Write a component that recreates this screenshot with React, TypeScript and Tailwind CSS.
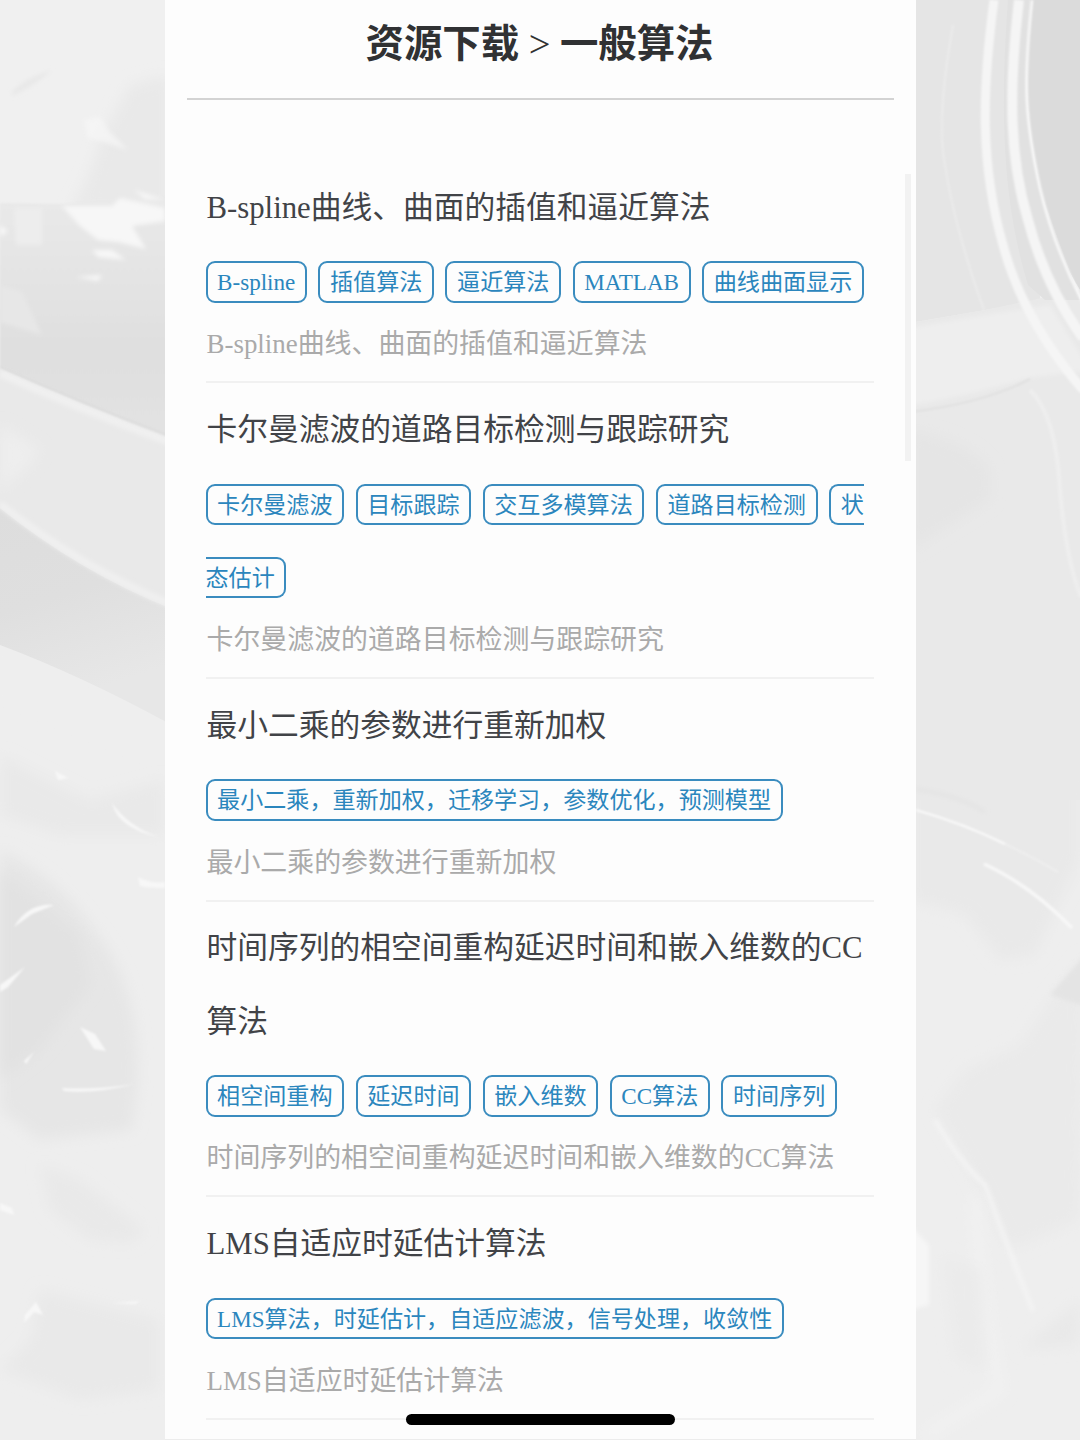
import React from "react";

type Item = { title: string; tags: string[]; description?: string };

const items: Item[] = [
  {
    title: "B-spline曲线、曲面的插值和逼近算法",
    tags: ["B-spline", "插值算法", "逼近算法", "MATLAB", "曲线曲面显示"],
  },
  {
    title: "卡尔曼滤波的道路目标检测与跟踪研究",
    tags: ["卡尔曼滤波", "目标跟踪", "交互多模算法", "道路目标检测", "状态估计"],
  },
  {
    title: "最小二乘的参数进行重新加权",
    tags: ["最小二乘，重新加权，迁移学习，参数优化，预测模型"],
  },
  {
    title: "时间序列的相空间重构延迟时间和嵌入维数的CC算法",
    tags: ["相空间重构", "延迟时间", "嵌入维数", "CC算法", "时间序列"],
  },
  {
    title: "LMS自适应时延估计算法",
    tags: ["LMS算法，时延估计，自适应滤波，信号处理，收敛性"],
  },
];

/** Pale marble texture behind the card. */
function Marble() {
  return (
    <svg className="absolute inset-0" width="1080" height="1440" viewBox="0 0 1080 1440" fill="none">
      <defs>
        <filter id="soft" x="-30%" y="-30%" width="160%" height="160%">
          <feGaussianBlur stdDeviation="7" />
        </filter>
        <filter id="fine" x="-20%" y="-20%" width="140%" height="140%">
          <feGaussianBlur stdDeviation="1" />
        </filter>
        <filter id="mist" x="-20%" y="-20%" width="140%" height="140%">
          <feGaussianBlur stdDeviation="2" />
        </filter>
        <linearGradient id="bandA" x1="0" y1="200" x2="0" y2="430" gradientUnits="userSpaceOnUse">
          <stop offset="0" stopColor="#e9e9e9" />
          <stop offset="0.65" stopColor="#dfdfdf" />
          <stop offset="1" stopColor="#e2e2e2" />
        </linearGradient>
        <linearGradient id="bandB" x1="0" y1="510" x2="60" y2="700" gradientUnits="userSpaceOnUse">
          <stop offset="0" stopColor="#dddddd" />
          <stop offset="0.5" stopColor="#dfdfdf" />
          <stop offset="1" stopColor="#e7e7e7" />
        </linearGradient>
      </defs>
      <rect width="1080" height="1440" fill="#eeeeee" />

      {/* left side */}
      <rect width="170" height="210" fill="#f0f0f0" />
      <path d="M130 85 L170 75 V210 H70 Q92 175 100 140 Z" fill="#e9e9e9" filter="url(#soft)" />
      <path d="M0 203 L60 204 L170 195 V440 Q80 405 0 368 Z" fill="url(#bandA)" filter="url(#fine)" />
      <path d="M0 285 L22 292 L42 335 L0 322 Z" fill="#e7e7e7" filter="url(#mist)" />
      <path d="M14 208 H42 V245 H16 Z" fill="#ededed" filter="url(#mist)" />
      <g fill="#f7f7f7" filter="url(#mist)">
        <path d="M62 206 L112 206 L120 198 L165 208 V221 L132 226 L146 249 L118 242 L98 240 L80 226 Z" />
        <path d="M92 250 L112 250 L126 260 L98 257 Z" />
        <path d="M84 120 L100 117 L108 130 L128 150 L104 142 L88 138 Z" opacity="0.7" />
        <path d="M134 190 L165 200 L145 199 Z" />
        <path d="M76 277 L102 275 L98 281 Z" />
        <path d="M0 225 L8 231 L0 237 Z" />
      </g>
      <path d="M12 92 Q25 78 52 70 Q36 85 12 96 Z" fill="#e8e8e8" filter="url(#mist)" />
      <path d="M0 368 Q80 405 170 440 V608 Q80 572 0 508 Z" fill="#e9e9e9" />
      <path d="M0 373 Q80 409 170 442" stroke="#f0f0f0" strokeWidth="8" filter="url(#mist)" />
      <path d="M0 425 L24 440 L40 450 L24 470 L0 490 Z" fill="#eeeeee" filter="url(#soft)" />
      <path d="M0 367 Q80 402 170 436" stroke="#d9d9d9" strokeWidth="1.5" filter="url(#fine)" />
      <path d="M0 508 Q80 572 170 608 V724 Q80 675 0 645 Z" fill="url(#bandB)" />
      <path d="M0 504 Q80 567 170 604" stroke="#f0f0f0" strokeWidth="7" filter="url(#mist)" />
      <path d="M0 650 Q80 682 170 728 V770 L0 700 Z" fill="#eeeeee" filter="url(#mist)" />
      <path d="M0 755 L90 800 L165 780 V835 L60 835 L0 815 Z" fill="#e9e9e9" filter="url(#soft)" />
      <path d="M0 850 Q60 880 90 925 Q140 980 138 1080 L132 1130 L40 1140 L0 1110 Z" fill="#e6e6e6" filter="url(#soft)" />
      <path d="M0 870 L40 900 L80 935 L90 985 L40 1050 L0 1080 Z" fill="#e2e2e2" filter="url(#soft)" />
      <path d="M40 1165 L80 1180 L145 1230 L130 1243 L90 1240 L50 1210 Z" fill="#e9e9e9" filter="url(#soft)" />
      <path d="M40 1290 L160 1320 V1390 L80 1400 L0 1370 L30 1340 Z" fill="#e9e9e9" filter="url(#soft)" />
      <g fill="#f7f7f7" filter="url(#fine)">
        <path d="M14 927 Q28 903 54 905 L32 914 Z" />
        <path d="M0 985 L25 967 L8 987 L0 992 Z" />
        <path d="M80 1027 L95 1034 L106 1051 L94 1049 Z" />
        <path d="M62 1088 Q95 1090 135 1084 Q95 1094 64 1091 Z" />
        <path d="M112 803 Q128 826 158 837 Q118 828 112 803 Z" />
        <path d="M138 877 Q150 884 165 882 V888 Q150 888 140 886 Z" />
        <path d="M55 771 L68 778 L58 780 Z" />
        <path d="M24 1061 L34 1052 L26 1064 Z" />
        <path d="M0 1203 L12 1208 L14 1215 L0 1210 Z" />
        <path d="M36 1302 L43 1315 L34 1312 L24 1323 L25 1315 Z" />
        <path d="M112 1303 L140 1301 L135 1304 Z" />
      </g>

      {/* right side */}
      <path d="M910 0 H1040 V300 L985 310 L910 323 Z" fill="#e5e5e5" />
      <path d="M910 323 L985 310 L1080 290 V800 H910 Z" fill="#e9e9e9" />
      <path d="M910 328 L985 315 L1050 305 L1090 370 L1028 378 Q960 398 910 405 Z" fill="#eeeeee" filter="url(#mist)" />
      <path d="M910 412 Q985 403 1030 379" stroke="#e0e0e0" strokeWidth="2" filter="url(#fine)" />
      <path d="M910 430 Q970 440 990 470 L990 500 L910 550 Z" fill="#e5e5e5" filter="url(#soft)" />
      <path d="M1030 0 C1022 90 1028 120 1040 190 Q1055 250 1080 290 V0 Z" fill="#dbdbdb" />
      <path d="M1008 0 C1000 110 1002 200 1028 285 L1045 300 L1080 300 L1040 190 C1022 110 1027 50 1030 0 Z" fill="#e1e1e1" />
      <g filter="url(#fine)" stroke="#f5f5f5">
        <path d="M994 0 C982 90 980 165 1003 245 Q1023 320 1083 390" strokeWidth="9" />
        <path d="M1019 0 C1008 95 1010 160 1028 220 Q1045 285 1083 338" strokeWidth="10" />
        <path d="M1032 0 C1023 85 1025 120 1040 188 Q1053 245 1083 303" strokeWidth="2.5" stroke="#fafafa" />
        <path d="M953 25 Q936 120 945 165 Q955 230 984 310" strokeWidth="1.5" stroke="#ededed" />
        <path d="M1030 390 Q1056 415 1060 490 Q1066 560 1081 597" strokeWidth="4" stroke="#eeeeee" />
      </g>
      <path d="M910 780 H1080 V860 L1060 900 L1035 955 L1000 960 L965 915 L910 900 Z" fill="#e9e9e9" filter="url(#soft)" />
      <path d="M916 789 Q960 796 985 812" stroke="#e4e4e4" strokeWidth="4" filter="url(#mist)" />
      <g filter="url(#fine)" stroke="#fafafa">
        <path d="M916 810 Q965 824 1005 844" strokeWidth="2" />
        <path d="M1005 844 Q1035 858 1058 872" strokeWidth="1.5" stroke="#f0f0f0" />
        <path d="M984 864 Q1030 885 1072 928" strokeWidth="3.5" stroke="#f7f7f7" />
      </g>
      <path d="M1085 955 L1050 1000 L1020 1045 L965 1070 L935 1110 L975 1180 L1010 1250 L1080 1220 Z" fill="#eaeaea" filter="url(#soft)" />
      <path d="M1085 955 L1050 995 L1085 1006 Z" fill="#e4e4e4" filter="url(#mist)" />
      <path d="M935 1120 Q958 1160 985 1185 Q1005 1240 1033 1311" stroke="#f4f4f4" strokeWidth="4" filter="url(#mist)" />
      <path d="M975 1195 Q980 1290 1000 1390 L925 1435" stroke="#f3f3f3" strokeWidth="7" filter="url(#soft)" />
      <path d="M942 1255 L980 1270 L985 1370 L955 1360 Z" fill="#ebebeb" filter="url(#soft)" />
      <path d="M910 1225 L929 1245 V1305 L910 1310 Z" fill="#f6f6f6" filter="url(#mist)" />
      <path d="M1080 1300 L1020 1350 L1080 1345 Z" fill="#e9e9e9" filter="url(#soft)" />
    </svg>
  );
}

function Entry({ item }: { item: Item }) {
  return (
    <article className="border-b-2 border-[#f1f1f1] pt-[10.5px] pb-[12.1px]">
      <h2 className="pl-px text-[30.76px] leading-[73.4px] text-[#414347]">{item.title}</h2>
      <div className="mt-px text-[23.08px] leading-[73.4px] text-[#2b86bd]">
        {item.tags.map((tag) => (
          <React.Fragment key={tag}>
            <span className="mr-[5.76px] rounded-[9px] border-2 border-[#3a8cbf] px-[9.6px] py-[5.7px]">{tag}</span>{" "}
          </React.Fragment>
        ))}
      </div>
      <p className="pl-px text-[26.92px] leading-[50px] text-[#aaaaaa]">{item.description ?? item.title}</p>
    </article>
  );
}

export default function App() {
  return (
    <div className="relative flex h-[1440px] w-[1080px] justify-center overflow-hidden bg-[#ededed]">
      <Marble />
      <main
        className="relative h-full w-[751px] overflow-hidden border-b border-[#ececec] bg-[#fdfdfd]"
        style={{ fontFamily: '"Liberation Serif", "Noto Sans CJK SC", sans-serif' }}
      >
        <header className="mx-[22px] h-[100px] border-b-2 border-[#d3d3d3] pt-[7px] pr-px text-center text-[38.4px] leading-[74px] font-bold text-[#303133]">
          资源下载 <span className="font-normal">&gt;</span> 一般算法
        </header>
        <section className="mr-[42px] ml-[41px] pt-[61px]">
          {items.map((item) => (
            <Entry key={item.title} item={item} />
          ))}
        </section>
        <div className="absolute top-[174px] right-[5px] h-[287px] w-[6px] bg-[#f2f2f2]" />
        <div className="absolute top-[1414px] left-[241px] h-[11px] w-[269px] rounded-full bg-black" />
      </main>
    </div>
  );
}
